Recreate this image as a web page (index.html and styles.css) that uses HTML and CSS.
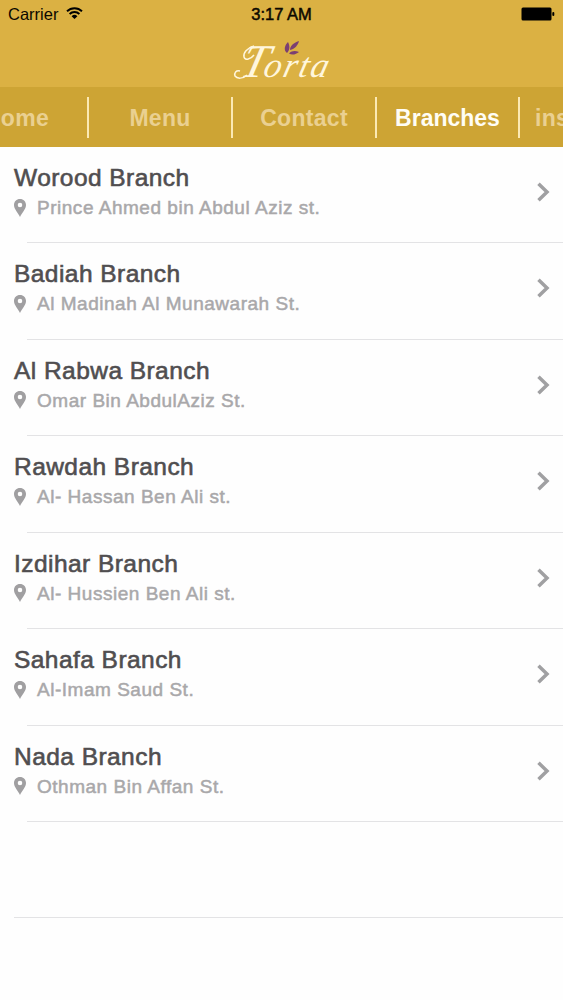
FILE: index.html
```html
<!DOCTYPE html>
<html lang="en">
<head>
  <meta charset="utf-8">
  <title>Torta - Branches</title>
  <link rel="stylesheet" href="styles.css">
</head>
<body>

<svg class="symbols">
  <symbol id="pin" viewBox="0 0 12 18">
    <path fill-rule="evenodd" d="M6 0C2.500 0 0 2.600 0 6c0 4 3.700 7.200 6 12 2.300-4.800 6-8 6-12C12 2.600 9.500 0 6 0zm0 3.700a2.300 2.300 0 1 1 0 4.600 2.300 2.300 0 0 1 0-4.600z"/>
  </symbol>
  <symbol id="chevron" viewBox="0 0 14 20">
    <path d="M2.500 1.800 11 10 2.500 18.200" fill="none" stroke="currentColor" stroke-width="3.500"/>
  </symbol>
</svg>

<header class="header">
  <div class="status">
    <div class="carrier">
      <span>Carrier</span>
      <svg class="wifi" viewBox="0 0 17 12">
        <path d="M1 4.300a10.700 10.700 0 0 1 15 0M3.600 7a7 7 0 0 1 9.800 0" fill="none" stroke="#000" stroke-width="1.900"/>
        <path d="M5.600 9.200a4.200 4.200 0 0 1 5.800 0L8.500 12z"/>
      </svg>
    </div>
    <div class="time">3:17 AM</div>
    <div class="battery">
      <svg width="34" height="14" viewBox="0 0 34 14">
        <rect x="0.500" y="0.500" width="30" height="13" rx="1.500"/>
        <rect x="31.300" y="5" width="2" height="4" rx="1"/>
      </svg>
    </div>
  </div>
  <svg class="logo" width="104" height="48" viewBox="0 0 104 48">
    <text class="logo-text" transform="translate(0 42) skewX(-14)"><tspan x="9" font-size="47">T</tspan><tspan x="32" font-size="35" letter-spacing="2">orta</tspan></text>
    <!-- swashes -->
    <path class="swash" d="M24 11C17 13 13 18 14 22c1 4 7 2 10-2"/>
    <path class="swash" d="M17 40C13 44 7 44 5 41c-1-3 1-6 5-5"/>
    <!-- leaves -->
    <g class="leaves">
      <path d="M57 18c-4-3-2-8 1-11 2 4 2 8-1 11z"/>
      <path d="M60 15c0-4 3-7 9-9-1 4-4 8-9 9z"/>
      <path d="M59 18.500c3-3 6-3 10-1.500-3 2.500-7 3.500-10 1.500z"/>
    </g>
  </svg>
</header>

<nav class="nav">
  <a class="tab first">Home</a>
  <a class="tab">Menu</a>
  <a class="tab">Contact</a>
  <a class="tab active">Branches</a>
  <a class="tab last">inst</a>
</nav>

<ul class="list">
  <li class="row">
    <div class="info">
      <h2>Worood Branch</h2>
      <p><svg class="pin"><use href="#pin"/></svg>Prince Ahmed bin Abdul Aziz st.</p>
    </div>
    <svg class="chevron"><use href="#chevron"/></svg>
  </li>
  <li class="row">
    <div class="info">
      <h2>Badiah Branch</h2>
      <p><svg class="pin"><use href="#pin"/></svg>Al Madinah Al Munawarah St.</p>
    </div>
    <svg class="chevron"><use href="#chevron"/></svg>
  </li>
  <li class="row">
    <div class="info">
      <h2>Al Rabwa Branch</h2>
      <p><svg class="pin"><use href="#pin"/></svg>Omar Bin AbdulAziz St.</p>
    </div>
    <svg class="chevron"><use href="#chevron"/></svg>
  </li>
  <li class="row">
    <div class="info">
      <h2>Rawdah Branch</h2>
      <p><svg class="pin"><use href="#pin"/></svg>Al- Hassan Ben Ali st.</p>
    </div>
    <svg class="chevron"><use href="#chevron"/></svg>
  </li>
  <li class="row">
    <div class="info">
      <h2>Izdihar Branch</h2>
      <p><svg class="pin"><use href="#pin"/></svg>Al- Hussien Ben Ali st.</p>
    </div>
    <svg class="chevron"><use href="#chevron"/></svg>
  </li>
  <li class="row">
    <div class="info">
      <h2>Sahafa Branch</h2>
      <p><svg class="pin"><use href="#pin"/></svg>Al-Imam Saud St.</p>
    </div>
    <svg class="chevron"><use href="#chevron"/></svg>
  </li>
  <li class="row">
    <div class="info">
      <h2>Nada Branch</h2>
      <p><svg class="pin"><use href="#pin"/></svg>Othman Bin Affan St.</p>
    </div>
    <svg class="chevron"><use href="#chevron"/></svg>
  </li>
  <li class="row empty"></li>
</ul>

</body>
</html>
```
FILE: styles.css
```css
* {
  box-sizing: border-box;
}

body {
  margin: 0;
  height: 1000px;
  overflow: hidden;
  background-color: #fefefe;
  font-family: "Liberation Sans", Arial, sans-serif;
}

.symbols {
  display: none;
}

.header {
  height: 87px;
  background-color: #dbb143;
}

.status {
  display: flex;
  height: 28px;
  padding: 0 8px;
  align-items: center;
  font-size: 16.5px;
  color: #0c0800;
}

.carrier, .time, .battery {
  flex: 1;
}

.carrier {
  display: flex;
  align-items: center;
  gap: 8px;
  padding-top: 1px;
}

.wifi {
  width: 17px;
  height: 12px;
  margin-top: -3px;
}

.time {
  text-align: center;
  font-size: 16.5px;
  -webkit-text-stroke: 0.5px #0c0800;
}

.battery {
  display: flex;
  justify-content: flex-end;
}

.logo {
  display: block;
  margin: 7px auto 0;
}

.logo-text {
  fill: #fff6dc;
  font-family: "Liberation Serif", "Times New Roman", serif;
  font-style: italic;
}

.swash {
  fill: none;
  stroke: #fff6dc;
  stroke-width: 1.5;
}

.leaves {
  fill: #7b3f72;
}

.nav {
  display: flex;
  height: 60px;
  padding: 10px 0;
  overflow: hidden;
  background-color: #cda434;
}

.tab {
  flex: none;
  width: 144px;
  height: 41px;
  border-right: 2px solid #fbe9b4;
  text-align: center;
  line-height: 43px;
  font-size: 23px;
  font-weight: bold;
  letter-spacing: 0.3px;
  color: #ead091;
}

.tab.first {
  width: 89px;
  padding-right: 38px;
  direction: rtl;
}

.tab.active {
  width: 143px;
  letter-spacing: 0;
  color: #fffdf5;
}

.tab.last {
  border: none;
  padding-left: 15px;
  text-align: left;
}

.list {
  margin: 0;
  padding: 0;
  list-style: none;
}

.row {
  display: flex;
  justify-content: space-between;
  height: 96.43px;
  padding: 16px 13px 0 14px;
  background: linear-gradient(#e3e3e5, #e3e3e5) 27px 100% / 100% 1px no-repeat;
}

.row.empty {
  background-position-x: 14px;
}

.row h2 {
  margin: 0;
  line-height: 30px;
  font-size: 24.5px;
  font-weight: normal;
  letter-spacing: 0.45px;
  color: #504e50;
  -webkit-text-stroke: 0.6px #504e50;
}

.row p {
  display: flex;
  align-items: center;
  margin: 0;
  line-height: 29px;
  font-size: 19px;
  letter-spacing: 0.52px;
  color: #a9a8aa;
  -webkit-text-stroke: 0.5px #a9a8aa;
}

.pin {
  width: 12px;
  height: 18px;
  margin-right: 11px;
  fill: #a09fa1;
  stroke: none;
}

.chevron {
  width: 14px;
  height: 20px;
  margin-top: 19px;
  color: #a0a0a2;
}
```
